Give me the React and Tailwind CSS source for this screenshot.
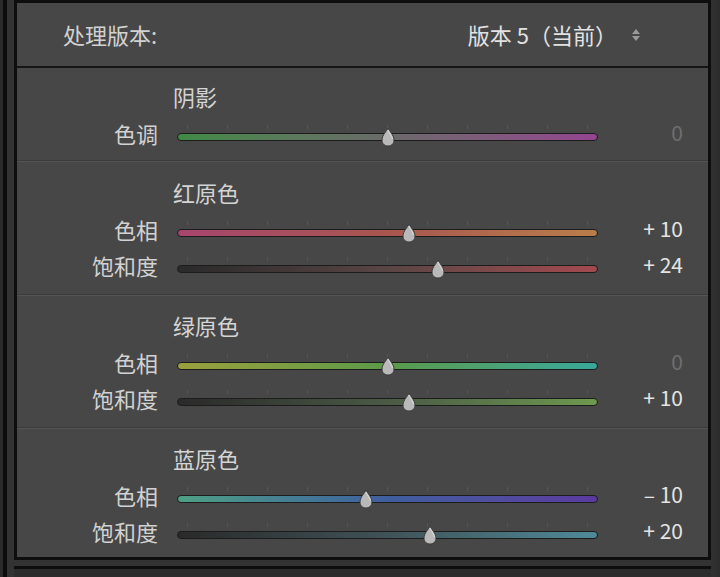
import React from "react";

const font = { fontFamily: '"Noto Sans CJK SC", "Noto Sans", sans-serif' };

const sections = [
  {
    title: "阴影",
    pad: "pt-[9px] pb-[9px]",
    rows: [
      { label: "色调", value: 0, track: "bg-gradient-to-r from-[#3f8a45] via-[#6a6a6a] to-[#93448f]" },
    ],
  },
  {
    title: "红原色",
    pad: "pt-[12px] pb-[11px]",
    rows: [
      { label: "色相", value: 10, track: "bg-gradient-to-r from-[#a8456e] via-[#a8564f] to-[#b97e4a]" },
      { label: "饱和度", value: 24, track: "bg-gradient-to-r from-[#2a2a2a] via-[#5a4545] to-[#a3494f]" },
    ],
  },
  {
    title: "绿原色",
    pad: "pt-[11px] pb-[11px]",
    rows: [
      { label: "色相", value: 0, track: "bg-gradient-to-r from-[#9aa03c] via-[#5a9a48] to-[#38a89a]" },
      { label: "饱和度", value: 10, track: "bg-gradient-to-r from-[#2a2a2a] via-[#4a5a45] to-[#6e9a4e]" },
    ],
  },
  {
    title: "蓝原色",
    pad: "pt-[11px] pb-[8px]",
    rows: [
      { label: "色相", value: -10, track: "bg-gradient-to-r from-[#4fa084] via-[#3f5e9e] to-[#5a3aa0]" },
      { label: "饱和度", value: 20, track: "bg-gradient-to-r from-[#2a2a2a] via-[#3f5358] to-[#4f8a9a]" },
    ],
  },
];

function Thumb() {
  return (
    <svg width="16" height="20" viewBox="0 0 16 20" className="block">
      <path
        d="M8 1 C9 4 14 8 14 13 C14 17 11 19 8 19 C5 19 2 17 2 13 C2 8 7 4 8 1 Z"
        fill="#b9b9b9"
        stroke="#3a3a3a"
        strokeWidth="1"
      />
      <path d="M8 3 C9 6 12 9 12.5 12" fill="none" stroke="#dedede" strokeWidth="1" />
    </svg>
  );
}

function Slider({ value, track }) {
  const pos = 50 + value / 2;
  return (
    <div className="relative w-[421px] h-[36px] flex items-center">
      <div className="absolute left-[10px] right-[10px] top-[10px] flex justify-between">
        {Array.from({ length: 11 }).map((_, i) => (
          <div key={i} className="w-px h-[4px] bg-[#555555]" />
        ))}
      </div>
      <div className={`w-full h-[8px] mt-[8px] rounded-full border border-[#1c1c1c] ${track}`} />
      <div
        className="absolute top-[12px] -translate-x-1/2"
        style={{ left: `${pos}%` }}
      >
        <Thumb />
      </div>
    </div>
  );
}

function fmt(v) {
  if (v === 0) return "0";
  return v > 0 ? `+ ${v}` : `– ${-v}`;
}

function Row({ label, value, track }) {
  return (
    <div className="flex items-center h-[36px]">
      <div className="w-[141px] text-right text-[22px] text-[#d2d2d2]">{label}</div>
      <div className="w-[19px]" />
      <Slider value={value} track={track} />
      <div
        className={`w-[85px] text-right text-[21px] ${value === 0 ? "text-[#6e6e6e]" : "text-[#e4e4e4]"}`}
      >
        {fmt(value)}
      </div>
    </div>
  );
}

function Section({ title, rows, pad, last }) {
  return (
    <div className={`${pad} ${last ? "" : "border-b border-b-[#3b3b3b] shadow-[0_1px_0_#555555]"}`}>
      <div className="h-[38px] flex items-center pl-[156px] text-[22px] text-[#d4d4d4]">{title}</div>
      {rows.map((r) => (
        <Row key={r.label} {...r} />
      ))}
    </div>
  );
}

export default function App() {
  return (
    <div className="w-[720px] h-[577px] bg-[#2c2c2c] flex overflow-hidden" style={font}>
      <div className="w-[3px] bg-[#2a2a2a]" />
      <div className="w-[4px] bg-[#0c0c0c]" />
      <div className="w-[7px] bg-[#333333]" />
      <div className="flex flex-col">
        <div className="w-[697px] border-t-[3px] border-x-[3px] border-b-[3px] border-[#0e0e0e] bg-[#474747]">
          <div className="h-[65px] flex items-center justify-between pl-[46px] pr-[67px] border-b-[2px] border-[#151515]">
            <span className="text-[22px] text-[#d2d2d2]">处理版本:</span>
            <div className="flex items-center gap-[14px]">
              <span className="text-[22px] text-[#e2e2e2]">版本 5（当前）</span>
              <svg width="10" height="16" viewBox="0 0 10 16">
                <path d="M5 2 L9 7 L1 7 Z" fill="#9a9a9a" />
                <path d="M5 14 L9 9 L1 9 Z" fill="#9a9a9a" />
              </svg>
            </div>
          </div>
          {sections.map((s, i) => (
            <Section key={s.title} {...s} last={i === sections.length - 1} />
          ))}
        </div>
        <div className="h-[6px] bg-[#333333]" />
        <div className="h-[3px] bg-[#0e0e0e]" />
      </div>
      <div className="w-[6px] bg-[#303030]" />
    </div>
  );
}
